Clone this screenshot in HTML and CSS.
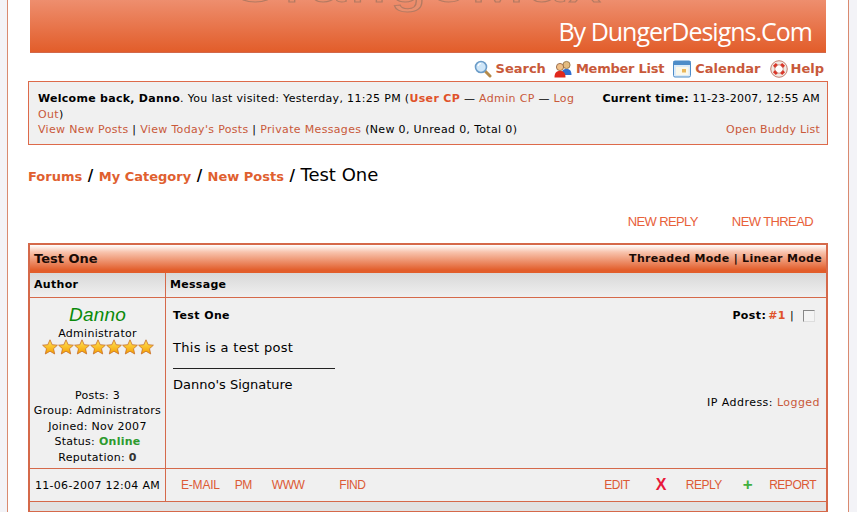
FILE: index.html
```html
<!DOCTYPE html>
<html lang="en">
<head>
<meta charset="utf-8">
<title>Test One</title>
<link rel="stylesheet" href="styles.css">
</head>
<body>
<div class="page">
  <div class="banner">
    <span class="banner-title">OrangeMax</span>
    <span class="banner-by">By DungerDesigns.Com</span>
  </div>
  <nav class="topnav">
    <a class="topnav-item search"><svg class="ico" viewBox="0 0 18 18"><path d="M10.800 10.800 16 16" stroke="#b58a4a" stroke-width="3" stroke-linecap="round"/><circle cx="7" cy="7" r="5.500" fill="#cfe6f8" stroke="#6b9cc8" stroke-width="1.600"/><path d="M4 6a3.200 3.200 0 0 1 3-2.500" stroke="#fff" stroke-width="1.200" fill="none"/></svg>Search</a>
    <a class="topnav-item member"><svg class="ico" viewBox="0 0 18 18"><circle cx="12.500" cy="5" r="3.600" fill="#e3bb80" stroke="#8a6a3a" stroke-width=".8"/><path d="M7.500 15c0-4.500 2-6 5-6s5 1.500 5 6z" fill="#2f6fd0"/><circle cx="6" cy="7" r="3.600" fill="#f0c088" stroke="#8a5a3a" stroke-width=".8"/><path d="M.5 17.500c0-5 2-6.500 5.500-6.500s5.500 1.500 5.500 6.500z" fill="#e0281c"/></svg>Member List</a>
    <a class="topnav-item calendar"><svg class="ico" viewBox="0 0 18 18"><rect x=".5" y="1" width="17" height="16" rx="1.500" fill="#dcebf8" stroke="#4d8cc8"/><rect x=".5" y="1" width="17" height="4" fill="#4d8cc8"/><rect x="3" y="7" width="12.500" height="8" fill="#fbf8ea"/><rect x="9" y="9" width="4" height="3.500" fill="#eab75a"/></svg>Calendar</a>
    <a class="topnav-item help"><svg class="ico" viewBox="0 0 18 18"><circle cx="9" cy="9" r="6.300" fill="none" stroke="#f0e8e2" stroke-width="4"/><path d="M4.400 4.400 6.500 6.500M13.600 4.400 11.500 6.500M4.400 13.600 6.500 11.500M13.600 13.600 11.500 11.500" stroke="#dc3428" stroke-width="4"/><circle cx="9" cy="9" r="8.300" fill="none" stroke="#b8604c" stroke-width=".8"/><circle cx="9" cy="9" r="4.200" fill="none" stroke="#b8604c" stroke-width=".6"/></svg>Help</a>
  </nav>
  <section class="welcome">
    <div class="welcome-main">
      <b>Welcome back, Danno</b>. You last visited: Yesterday, 11:25 PM (<a class="strong-link">User CP</a> — <a>Admin CP</a> — <a>Log Out</a>)<br>
      <a>View New Posts</a> | <a>View Today's Posts</a> | <a>Private Messages</a> (New 0, Unread 0, Total 0)
    </div>
    <div class="welcome-side">
      <div><b>Current time:</b> 11-23-2007, 12:55 AM</div>
      <a>Open Buddy List</a>
    </div>
  </section>
  <div class="crumbs"><a>Forums</a><i>/</i><a>My Category</a><i>/</i><a>New Posts</a><i>/</i><span>Test One</span></div>
  <div class="actions"><a>NEW REPLY</a><a>NEW THREAD</a></div>
  <section class="thread">
    <header class="thread-head"><span>Test One</span><span class="modes">Threaded Mode | Linear Mode</span></header>
    <div class="post-grid">
      <div class="col-head">Author</div>
      <div class="col-head msg">Message</div>
      <div class="author">
        <div class="name">Danno</div>
        <div>Administrator</div>
        <svg class="stars" viewBox="0 0 112 16">
          <defs>
            <linearGradient id="starfill" x1="0" y1="0" x2="0" y2="1"><stop offset="0" stop-color="#ffe65a"/><stop offset="1" stop-color="#f59e00"/></linearGradient>
            <polygon id="star" points="8,.8 10.200,5.700 15.400,6.200 11.500,9.700 12.700,15 8,12.200 3.300,15 4.500,9.700 .6,6.200 5.800,5.700" fill="url(#starfill)" stroke="#c8702a" stroke-width=".8"/>
          </defs>
          <use href="#star"/><use href="#star" x="16"/><use href="#star" x="32"/><use href="#star" x="48"/><use href="#star" x="64"/><use href="#star" x="80"/><use href="#star" x="96"/>
        </svg>
        <div class="stats">
          <div>Posts: 3</div>
          <div>Group: Administrators</div>
          <div>Joined: Nov 2007</div>
          <div>Status: <b class="online">Online</b></div>
          <div>Reputation: <b class="rep">0</b></div>
        </div>
      </div>
      <div class="message">
        <div class="msg-top"><b>Test One</b><span class="post-no"><b>Post:</b><a class="num">#1</a><span class="bar">|</span><span class="check"></span></span></div>
        <p class="body">This is a test post</p>
        <div class="sig-rule"></div>
        <p class="sig">Danno's Signature</p>
        <div class="ip">IP Address: <a>Logged</a></div>
      </div>
      <div class="date">11-06-2007 12:04 AM</div>
      <div class="tools">
        <div class="tools-left"><a class="email">E-MAIL</a><a>PM</a><a class="www">WWW</a><a class="find">FIND</a></div>
        <div class="tools-right"><a class="edit">EDIT</a><span class="x">X</span><a class="reply">REPLY</a><span class="plus">+</span><a class="report">REPORT</a></div>
      </div>
    </div>
    <div class="thread-foot"></div>
  </section>
</div>
</body>
</html>
```

FILE: styles.css
```css
html, body { margin: 0; padding: 0; }
body {
  height: 512px;
  overflow: hidden;
  background: #f3f3f7;
  font: 11px/15.500px "DejaVu Sans", sans-serif;
  letter-spacing: .28px;
  color: #000;
}
a { color: #c9593a; }
.page {
  width: 842px;
  height: 512px;
  box-sizing: border-box;
  margin-left: 7px;
  padding: 0 0 0 20px;
  background: #fff;
  border-left: 1px solid #d98a70;
  border-right: 1px solid #d98a70;
}
.banner {
  height: 53px;
  box-sizing: border-box;
  margin-left: 2px;
  width: 796px;
  background: linear-gradient(#ee8e6e, #e25d2a);
  border-bottom: 1px solid #d2684a;
  display: flex;
  flex-direction: column;
  align-items: flex-end;
  position: relative;
  overflow: hidden;
}
.banner-title {
  position: absolute;
  left: 200px;
  top: -39px;
  font: 48px/50px "Liberation Sans", sans-serif;
  letter-spacing: 3px;
  color: #e98f6e;
  -webkit-text-stroke: 1px #b47a62;
  transform: scaleX(1.35);
  transform-origin: left top;
}
.banner-by {
  margin: 16px 14px 0 0;
  font: 25px/30px "Open Sans", sans-serif;
  letter-spacing: -1px;
  color: #fff;
}
.topnav {
  display: flex;
  justify-content: flex-end;
  box-sizing: border-box;
  height: 28px;
  width: 800px;
  align-items: center;
  padding: 3px 4px 0 0;
}
.topnav-item {
  display: flex;
  align-items: center;
  gap: 4px;
  margin-left: 9px;
  font: bold 13px/16px "DejaVu Sans", sans-serif;
  letter-spacing: 0;
  color: #c8593a;
}
.member { letter-spacing: -.25px; margin-left: 8px; }
.help { gap: 3px; }
.ico { width: 18px; height: 18px; }
.welcome {
  width: 800px;
  box-sizing: border-box;
  height: 64px;
  border: 1px solid #dd6a4a;
  background: #f0f0f0;
  padding: 9px 7px 0 9px;
  display: flex;
  justify-content: space-between;
}
.welcome-main { width: 545px; letter-spacing: .33px; }
.welcome-main b { letter-spacing: .28px; }
.strong-link { font-weight: bold; color: #e0522a; }
.welcome-side {
  display: flex;
  flex-direction: column;
  align-items: flex-end;
  gap: 15.500px;
  letter-spacing: .22px;
}
.crumbs {
  margin-top: 19px;
  height: 22px;
  font: bold 13px/22px "DejaVu Sans", sans-serif;
  letter-spacing: 0;
  display: flex;
  gap: 5px;
  align-items: baseline;
}
.crumbs a { color: #e0602f; }
.crumbs i { font-style: normal; color: #000; font-size: 15px; padding: 0 .5px; }
.crumbs span { font: 400 18px/22px "DejaVu Sans", sans-serif; color: #000; }
.actions {
  margin-top: 24px;
  height: 23px;
  width: 785px;
  display: flex;
  justify-content: flex-end;
  gap: 34px;
  align-items: center;
}
.actions a {
  font: 13px/16px "Liberation Sans", sans-serif;
  letter-spacing: -.6px;
  color: #e8613a;
}
.thread {
  margin-top: 10px;
  width: 800px;
  box-sizing: border-box;
  border: 2px solid #d5694a;
  background: #f0f0f0;
}
.thread-head {
  height: 28px;
  display: flex;
  justify-content: space-between;
  align-items: center;
  padding: 0 4px;
  background: linear-gradient(#fff 0%, #f8c4ae 25%, #e25d2a 90%);
  font: bold 13px/16px "DejaVu Sans", sans-serif;
  letter-spacing: 0;
  color: #1a0a05;
}
.modes { font-size: 11px; letter-spacing: .3px; }
.post-grid {
  display: grid;
  grid-template-columns: 135px 1fr;
  grid-template-rows: 25px 170px 34px;
}
.col-head {
  box-sizing: border-box;
  background: linear-gradient(#d8d8d8, #f0f0f0);
  font: bold 11px/24px "DejaVu Sans", sans-serif;
  padding-left: 4px;
  border-bottom: 1px solid #d5694a;
  letter-spacing: .3px;
}
.col-head.msg, .message, .tools { border-left: 1px solid #d5694a; }
.col-head.msg { padding-left: 4px; }
.author {
  text-align: center;
  padding-top: 5px;
  display: flex;
  flex-direction: column;
  align-items: center;
}
.name {
  font: italic 19px/23px "Liberation Sans", sans-serif;
  letter-spacing: .2px;
  color: #0a8a0a;
}
.stars { display: block; width: 112px; height: 16px; margin-top: -3px; }
.stats { margin-top: 33px; }
.online { color: #2d9a2d; }
.rep { color: #333; }
.message { padding: 10px 6px 0 7px; }
.msg-top { display: flex; justify-content: space-between; padding-right: 5px; letter-spacing: .4px; }
.post-no { display: flex; align-items: center; gap: 2px; }
.num { color: #e0522a; font-weight: bold; }
.bar { padding: 0 7px 0 2px; }
.check { width: 10px; height: 10px; border: 1px solid #888; border-right-color: #ddd; border-bottom-color: #ddd; background: #f4f4f4; }
.body { margin: 15px 0 0 0; font-size: 13px; line-height: 18px; letter-spacing: .3px; }
.sig-rule { width: 162px; height: 1px; background: #222; margin-top: 11px; }
.sig { margin: 7px 0 0 0; font-size: 13px; line-height: 18px; letter-spacing: 0; }
.ip { text-align: right; margin-top: 1px; letter-spacing: .45px; }
.date, .tools { border-top: 1px solid #d5694a; border-bottom: 1px solid #d5694a; }
.date { text-align: center; line-height: 33px; box-sizing: border-box; }
.tools {
  box-sizing: border-box;
  display: flex;
  justify-content: space-between;
  align-items: center;
  padding: 0 10px 0 15px;
  font: 12px/16px "Liberation Sans", sans-serif;
  letter-spacing: -.5px;
}
.tools a { color: #dc5a35; }
.tools-left, .tools-right { display: flex; align-items: center; }
.tools-left { gap: 15px; }
.email { letter-spacing: -.2px; }
.www { margin-left: 5px; }
.find { margin-left: 20px; }
.x { margin-left: 26px; color: #e8173a; font: bold 16px/16px "Liberation Sans", sans-serif; }
.reply { margin-left: 20px; }
.plus { margin-left: 21px; color: #40b040; font: bold 17px/16px "Liberation Sans", sans-serif; }
.report { margin-left: 17px; }
.thread-foot { height: 9px; background: #e2e2e2; }
```
